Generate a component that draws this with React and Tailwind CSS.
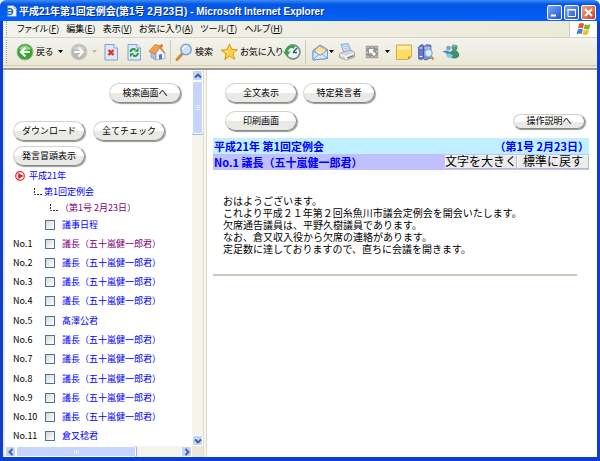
import { useState } from "react";

const CHAIR = "議長（五十嵐健一郎君）";

const speakers = [
  { no: 1, name: CHAIR, visited: true },
  { no: 2, name: CHAIR },
  { no: 3, name: CHAIR },
  { no: 4, name: CHAIR },
  { no: 5, name: "髙澤公君" },
  { no: 6, name: CHAIR },
  { no: 7, name: CHAIR },
  { no: 8, name: CHAIR },
  { no: 9, name: CHAIR },
  { no: 10, name: CHAIR },
  { no: 11, name: "倉又稔君" },
];

const speech = [
  "おはようございます。",
  "これより平成２１年第２回糸魚川市議会定例会を開会いたします。",
  "欠席通告議員は、平野久樹議員であります。",
  "なお、倉又収入役から欠席の連絡があります。",
  "定足数に達しておりますので、直ちに会議を開きます。",
];

const menus = [
  ["ファイル", "F"],
  ["編集", "E"],
  ["表示", "V"],
  ["お気に入り", "A"],
  ["ツール", "T"],
  ["ヘルプ", "H"],
];

function Icon({ children, className = "w-[18px] h-[18px]" }) {
  return (
    <svg viewBox="0 0 18 18" className={`${className} shrink-0`} aria-hidden="true">
      {children}
    </svg>
  );
}

function IePageIcon() {
  return (
    <Icon className="w-3 h-3">
      <path d="M4 1h9l4 4v12H4z" fill="#fff" stroke="#8a9ab8" />
      <path d="M13 1v4h4" fill="#d5deee" stroke="#8a9ab8" />
      <circle cx="7" cy="10" r="4.5" fill="#fff" stroke="#1f6fd0" strokeWidth="2.4" />
      <path d="M3 10h8" stroke="#1f6fd0" strokeWidth="2" />
    </Icon>
  );
}

function WindowsFlag() {
  return (
    <svg viewBox="0 0 16 14" className="w-4 h-3.5" aria-hidden="true">
      <path d="M3 2c2-1.3 3.6-1 5-.2L7 6.4C5.5 5.600 4 5.600 2 6.600z" fill="#e8552b" />
      <path d="M8.800 2.200c2 1 3.600 1 5.700-.2l-1.200 4.700c-2 1.100-3.700 1.100-5.500.1z" fill="#7cb82f" />
      <path d="M1.800 7.400c2-1.100 3.600-.9 5-.1L5.700 12c-1.500-.8-3-.8-5.200.2z" fill="#3c7fe0" />
      <path d="M7.600 7.700c2 1 3.500 1 5.500-.1l-1.200 4.700c-2 1.100-3.600 1-5.400 0z" fill="#f6bb20" />
    </svg>
  );
}

function BackIcon() {
  return (
    <Icon>
      <circle cx="9" cy="9" r="8" fill="#38a52f" stroke="#9bb594" />
      <path d="M3 6a7 7 0 0 1 12 0C11 8 7 8 3 6z" fill="#8ad77f" />
      <path d="M9.500 4.500 5 9l4.500 4.500M5.500 9H14" fill="none" stroke="#fff" strokeWidth="2.200" />
    </Icon>
  );
}

function ForwardIcon() {
  return (
    <Icon>
      <circle cx="9" cy="9" r="8" fill="#b9b9b5" stroke="#cfcfca" />
      <path d="M3 6a7 7 0 0 1 12 0C11 8 7 8 3 6z" fill="#d0d0cc" />
      <path d="M8.500 4.500 13 9l-4.500 4.500M12.500 9H4" fill="none" stroke="#f6f6f4" strokeWidth="2.200" />
    </Icon>
  );
}

function StopIcon() {
  return (
    <Icon>
      <path d="M3 1.500h9L15.500 5v12H3z" fill="#dce9fc" stroke="#7f9fd6" />
      <path d="M12 1.500V5h3.500" fill="#fff" stroke="#7f9fd6" />
      <path d="m6.500 7 5 5m0-5-5 5" stroke="#e2331d" strokeWidth="2.400" />
    </Icon>
  );
}

function RefreshIcon() {
  return (
    <Icon>
      <path d="M3 1.500h9L15.500 5v12H3z" fill="#dce9fc" stroke="#7f9fd6" />
      <path d="M12 1.500V5h3.500" fill="#fff" stroke="#7f9fd6" />
      <path d="M5.500 9c.2-3 3-3.500 5-2.200" fill="none" stroke="#2c9a33" strokeWidth="2" />
      <path d="M9.500 8.800h4V4.800z" fill="#2c9a33" />
      <path d="M13 10c-.2 3-3 3.500-5 2.200" fill="none" stroke="#2c9a33" strokeWidth="2" />
      <path d="M9 10.200H5v4z" fill="#2c9a33" />
    </Icon>
  );
}

function HomeIcon() {
  return (
    <Icon>
      <path d="m3 8 5 2v7l-5-2.500z" fill="#a9bde6" stroke="#7d92c4" strokeWidth=".6" />
      <path d="m8 10 4-5 5 5v5.500L8 17z" fill="#f3f6fd" stroke="#8396c2" strokeWidth=".7" />
      <path d="M11 16.500v-5l3-.5v5z" fill="#4f7cc9" />
      <path d="m1 8.500 6-7L12.500 3 7 11z" fill="#f0a04a" stroke="#c57629" strokeWidth=".7" />
      <path d="m12 3 5.500 7-1.500.6L11.500 5z" fill="#d97b35" />
      <path d="M12.500 1.500h2v3.300l-2-1.500z" fill="#c94b30" />
    </Icon>
  );
}

function SearchIcon() {
  return (
    <Icon>
      <path d="m7.500 10.500-5.500 6" stroke="#d28a3f" strokeWidth="3" strokeLinecap="round" />
      <circle cx="11" cy="6.500" r="5.200" fill="#c9e4fb" stroke="#7c9fcb" strokeWidth="1.400" />
      <path d="M7.800 6c.4-2 2-3 3.700-2.800" fill="none" stroke="#fff" strokeWidth="1.500" />
    </Icon>
  );
}

function StarIcon() {
  return (
    <Icon>
      <path
        d="m9.500 1 2.200 5.300 5.800.3-4.500 3.800 1.700 5.900-5-3.200-5 3.600 1.400-6-5-3.500 6-.6z"
        fill="#fbd23e"
        stroke="#d69a1c"
      />
      <path d="m9.400 4-1.500 4-3.600.3 3 1.800z" fill="#fff2ae" />
    </Icon>
  );
}

function HistoryIcon() {
  return (
    <Icon>
      <circle cx="10" cy="9" r="7" fill="#edf5f4" stroke="#7e9796" strokeWidth="1.800" />
      <path d="M10 9.500 14 5M10 9.500h4" fill="none" stroke="#35567c" strokeWidth="1.300" />
      <path d="M3.500 10c-.5-5 4-7.700 8-5.500" fill="none" stroke="#3aa34a" strokeWidth="2.800" />
      <path d="M0 8.500h7.500L4 13.500z" fill="#3aa34a" />
    </Icon>
  );
}

function MailIcon() {
  return (
    <Icon>
      <path d="m2 7.500 7-5.500 7.500 4.500v9L2 17z" fill="#9fc3f2" stroke="#6a90cc" />
      <path d="m4.500 6.500 4-3 6 2.500v4.500L9 12l-4.500-2z" fill="#fbe3ad" stroke="#e1a748" strokeWidth=".8" />
      <path d="m2 8 7 4.500 7.500-5.500v8.500L2 17z" fill="#d5e7fc" stroke="#6a90cc" strokeWidth=".8" />
      <path d="m2 17 5.500-5.500M16.500 15.500 11 11" stroke="#6a90cc" strokeWidth=".8" />
    </Icon>
  );
}

function PrintIcon() {
  return (
    <Icon>
      <path d="m3 1.500 7-1 3 7.500-7 1.500z" fill="#d3e6fb" stroke="#7595c4" strokeWidth=".8" />
      <path d="m5 3.500 5-.6M6 5.700l5-.7" stroke="#8fb1dd" strokeWidth=".7" />
      <path d="m1.500 11 4.500-2.500L13 7l3.500 2.500V14L8 17l-6.500-2.500z" fill="#d4d5d8" stroke="#8d9098" strokeWidth=".8" />
      <path d="M2 11.300 8 13.500l8-3.500M8 13.500V17" fill="none" stroke="#f8f8f8" strokeWidth="1.200" />
      <path d="m9.500 14.800 6-2" stroke="#6b707b" strokeWidth="1.200" />
    </Icon>
  );
}

function SizeIcon() {
  return (
    <Icon>
      <path d="M3.500 3.500h11v11h-11z" fill="#92928e" stroke="#a3a39e" strokeWidth="1.500" />
      <path d="M6 6h5L9.500 7.500 13 11l-2 2-3.500-3.500L6 11z" fill="#fafaf8" />
      <path
        d="M4.500 4.500h1M8.500 4.500h1M12.500 4.500h1M4.500 13.500h1M8.500 13.500h1M12.500 13.500h1M4.500 9v1M13.500 8v1"
        stroke="#e8e8e4"
      />
    </Icon>
  );
}

function NoteIcon() {
  return (
    <Icon>
      <path d="M1.500 2h15v11.500L13 16.500H1.500z" fill="#fbdc67" stroke="#d9ac3b" />
      <path d="M2.500 3h13v3.500h-13z" fill="#fff0a5" />
      <path d="M16.500 13.500H13v3z" fill="#c8912a" />
    </Icon>
  );
}

function ResearchIcon() {
  return (
    <Icon>
      <path d="m1.500 4 3-2.500 2 .8V15l-2 1.800-3-1z" fill="#6579c4" stroke="#3e4f91" strokeWidth=".7" />
      <path d="m6.500 4 3-2.500 4.500.8V15l-5.500 2-2-1z" fill="#7b8bd0" stroke="#3e4f91" strokeWidth=".7" />
      <path d="M2.500 5h3M7.500 5h6M2.500 13.500h3" stroke="#e8ecff" />
      <path d="m13.500 13 3 3.500" stroke="#cf8e3b" strokeWidth="2.200" />
      <circle cx="11.500" cy="10" r="3.600" fill="#d6effc" stroke="#8fb3d8" strokeWidth="1.400" />
    </Icon>
  );
}

function MessengerIcon() {
  return (
    <Icon>
      <circle cx="6.500" cy="5" r="2.300" fill="#6aa9cf" />
      <path d="M0 9c3-2.500 7-2 9 1L6 13c-1.500-2.500-3-4-6-4z" fill="#4e91bd" />
      <circle cx="12.500" cy="4.500" r="3" fill="#4f9f78" />
      <path d="M8 9.500c1-3 6-3.500 8-.5 2.500 3.500.8 6.500-3.500 6.500S7 13 8 9.500z" fill="#3f8f72" />
      <path d="M4 12c2-2 6-1.500 7 .8-1 2.700-5.500 3.200-7-.8z" fill="#8fc4e8" />
      <path d="M11.500 3.500c.5-.8 1.300-1 2-.8" stroke="#d4f0dc" fill="none" />
    </Icon>
  );
}

function Caret({ disabled }) {
  return (
    <svg viewBox="0 0 5 3" className="w-[5px] h-[3px] shrink-0" aria-hidden="true">
      <path d="M0 0h5L2.500 3z" fill={disabled ? "#bab7a8" : "#000"} />
    </svg>
  );
}

function Grip() {
  return <span className="w-0 self-stretch border-l border-dotted border-[#a9a694]" />;
}

function ToolButton({ label, title, className = "", children }) {
  return (
    <button type="button" title={title} aria-label={title || label} className={`flex shrink-0 items-center ${className}`}>
      {children}
      {label && <span className="ml-0.5 whitespace-nowrap">{label}</span>}
    </button>
  );
}

function PillButton({ children, small }) {
  return (
    <button
      type="button"
      className={`w-[72px] shrink-0 whitespace-nowrap rounded-full border border-[#d2d2ce] border-r-[#888] border-b-[#888] bg-linear-to-b from-white from-50% to-[#e9e9e6] to-50% text-center text-[9px] shadow-[1px_1px_1px_#999] ${
        small ? "h-[15px] leading-3" : "h-5 leading-4"
      }`}
    >
      {children}
    </button>
  );
}

function ScrollArrow({ d, title }) {
  return (
    <button
      type="button"
      aria-label={title}
      className="flex h-[11px] w-[11px] shrink-0 items-center justify-center rounded-xs border border-white bg-[#c3d4fc]"
    >
      <svg viewBox="0 0 8 8" className="h-2 w-2">
        <path d={d} fill="none" stroke="#435f8f" strokeWidth="1.800" />
      </svg>
    </button>
  );
}

function Branch() {
  return (
    <svg viewBox="0 0 9 8" className="mr-0.5 h-2 w-[9px]" aria-hidden="true">
      <path d="M1.500 0v6.500H9" fill="none" stroke="#333" strokeDasharray="2 1" />
    </svg>
  );
}

function Check({ label, ...props }) {
  return (
    <input
      type="checkbox"
      aria-label={label}
      className="h-[10px] w-[10px] appearance-none border border-[#4f7396] bg-linear-to-br from-[#d9d9d3] to-white checked:bg-[#21a121]"
      {...props}
    />
  );
}

function TitleBar() {
  return (
    <header className="flex h-[21px] shrink-0 items-center rounded-t-md bg-linear-to-b from-[#3c8cf5] via-[#0456e4] via-20% to-[#0361fa] pr-1 pl-[5px] text-white">
      <IePageIcon />
      <h1 className="ml-0.5 flex-1 whitespace-nowrap pt-0.5 font-['Liberation_Sans','Noto_Sans_CJK_JP',sans-serif] text-[10px] leading-4 font-bold [text-shadow:1px_1px_#0a2f8a]">
        平成21年第1回定例会(第1号 2月23日) - Microsoft Internet Explorer
      </h1>
      <div className="flex gap-0.5 pt-1">
        <button type="button" aria-label="最小化" className="h-[15px] w-[15px] rounded-xs border border-white bg-linear-to-br from-[#7ea4f5] to-[#1f4fd8]">
          <svg viewBox="0 0 13 13"><path d="M3 9.500h5" stroke="#fff" strokeWidth="2" /></svg>
        </button>
        <button type="button" aria-label="最大化" className="h-[15px] w-[15px] rounded-xs border border-white bg-linear-to-br from-[#7ea4f5] to-[#1f4fd8]">
          <svg viewBox="0 0 13 13"><path d="M3 4h7.500v6.500H3zM2.500 3.500H11" fill="none" stroke="#fff" /></svg>
        </button>
        <button type="button" aria-label="閉じる" className="h-[15px] w-[15px] rounded-xs border border-white bg-linear-to-br from-[#f2a083] to-[#d5391a]">
          <svg viewBox="0 0 13 13"><path d="m3 3 7 7m0-7-7 7" stroke="#fff" strokeWidth="1.800" /></svg>
        </button>
      </div>
    </header>
  );
}

function MenuBar() {
  return (
    <nav className="flex h-[17px] shrink-0 items-stretch border-b border-[#d8d5c4] bg-linear-to-r from-[#f3f3ee] to-[#ece9d8] pl-[3px]">
      <Grip />
      <ul className="flex flex-1 items-center gap-[7px] pl-[10px] text-[9px] leading-3 [font-feature-settings:'palt']">
        {menus.map(([label, key]) => (
          <li key={key}>
            <button type="button" className="whitespace-nowrap">
              {label}(<u>{key}</u>)
            </button>
          </li>
        ))}
      </ul>
      <div className="flex w-7 items-center justify-center border-l border-[#d0ccba] bg-white">
        <WindowsFlag />
      </div>
    </nav>
  );
}

function Toolbar() {
  return (
    <div
      role="toolbar"
      className="flex h-7 shrink-0 items-stretch border-b border-[#cfccb9] bg-linear-to-b from-[#f3f3ee] to-[#ebe8d6] py-0.5 pl-[3px] text-[9px] [font-feature-settings:'palt']"
    >
      <Grip />
      <div className="flex items-center pl-[9px]">
        <ToolButton label="戻る"><BackIcon /></ToolButton>
        <span className="ml-[5px]"><Caret /></span>
        <ToolButton title="進む" className="ml-[7px]"><ForwardIcon /></ToolButton>
        <span className="ml-1"><Caret disabled /></span>
        <div className="ml-[5px] flex gap-[5px]">
          <ToolButton title="中止"><StopIcon /></ToolButton>
          <ToolButton title="更新"><RefreshIcon /></ToolButton>
          <ToolButton title="ホーム"><HomeIcon /></ToolButton>
        </div>
        <span className="ml-1 h-6 border-l border-[#cfccb9]" />
        <ToolButton label="検索" className="ml-1"><SearchIcon /></ToolButton>
        <ToolButton label="お気に入り" className="ml-[7px]"><StarIcon /></ToolButton>
        <ToolButton title="履歴"><HistoryIcon /></ToolButton>
        <span className="ml-1 h-6 border-l border-[#cfccb9]" />
        <ToolButton title="メール" className="ml-[5px]"><MailIcon /></ToolButton>
        <Caret />
        <ToolButton title="印刷" className="ml-1"><PrintIcon /></ToolButton>
        <ToolButton title="サイズ" className="ml-[7px]"><SizeIcon /></ToolButton>
        <span className="ml-1"><Caret /></span>
        <ToolButton title="メモ" className="ml-[5px]"><NoteIcon /></ToolButton>
        <ToolButton title="リサーチ" className="ml-1"><ResearchIcon /></ToolButton>
        <ToolButton title="Messenger" className="ml-[7px]"><MessengerIcon /></ToolButton>
      </div>
    </div>
  );
}

function IndexPane() {
  const [checked, setChecked] = useState({});
  const toggle = (no) => setChecked((prev) => ({ ...prev, [no]: !prev[no] }));

  return (
    <aside className="grid w-[200px] shrink-0 grid-cols-[1fr_11px] grid-rows-[1fr_11px] bg-[#ece9d8] pl-0.5">
      <div className="flex min-h-0 min-w-0 flex-col overflow-hidden bg-white pt-[13px] pl-2">
        <div className="flex justify-end pr-[11px]">
          <PillButton>検索画面へ</PillButton>
        </div>
        <div className="mt-[18px] flex flex-wrap gap-x-2 gap-y-[5px]">
          <PillButton>ダウンロード</PillButton>
          <PillButton>全てチェック</PillButton>
          <PillButton>発言冒頭表示</PillButton>
        </div>

        <div className="mt-0.5 text-[9px] leading-4 whitespace-nowrap">
          <div className="flex h-4 items-center pl-0.5">
            <svg viewBox="0 0 10 10" className="mr-1 h-[10px] w-[10px]" aria-hidden="true">
              <circle cx="5" cy="5" r="4.300" fill="#fff" stroke="#e0283c" strokeWidth="1.200" />
              <path d="M3.200 2 8.500 5 3.200 8z" fill="#e0182c" />
            </svg>
            <a href="#year" className="text-[#0000ff]">平成21年</a>
          </div>
          <div className="flex h-4 items-center pl-5">
            <Branch />
            <a href="#session" className="text-[#0000ff]">第1回定例会</a>
          </div>
          <div className="flex h-4 items-center pl-9">
            <Branch />
            <a href="#day" className="text-[#800080]">（第1号 2月23日）</a>
          </div>
          <div className="flex h-[18px] items-center pl-8">
            <Check label="議事日程" checked={!!checked.agenda} onChange={() => toggle("agenda")} />
            <a href="#agenda" className="ml-[7px] text-[#0000ff]">議事日程</a>
          </div>
        </div>

        <ul className="grid flex-1 auto-rows-fr text-[9px] leading-4 whitespace-nowrap">
          {speakers.map((s) => (
            <li key={s.no} className="flex items-center">
              <span className="w-8">No.{s.no}</span>
              <Check label={`No.${s.no}`} checked={!!checked[s.no]} onChange={() => toggle(s.no)} />
              <a href={`#no${s.no}`} className={`ml-[7px] ${s.visited ? "text-[#800080]" : "text-[#0000ff]"}`}>
                {s.name}
              </a>
            </li>
          ))}
        </ul>
      </div>

      <div className="flex flex-col bg-[#f4f3ec]">
        <ScrollArrow title="上へ" d="m1 5.500 3-3 3 3" />
        <div className="flex flex-1 flex-col">
          <div className="flex h-[15%] flex-col items-center justify-center gap-px rounded-xs border border-white bg-[#c5d5fd] shadow-[0_1px_#9db5e8]">
            <span className="w-1 border-t border-[#eef4fe]" />
            <span className="w-1 border-t border-[#eef4fe]" />
            <span className="w-1 border-t border-[#eef4fe]" />
          </div>
        </div>
        <ScrollArrow title="下へ" d="m1 2.500 3 3 3-3" />
      </div>
      <div className="flex bg-[#f4f3ec]">
        <ScrollArrow title="左へ" d="m5.500 1-3 3 3 3" />
        <div className="flex flex-1">
          <div className="flex w-[73%] items-center justify-center gap-px rounded-xs border border-white bg-[#c5d5fd] shadow-[1px_0_#9db5e8]">
            <span className="h-1 border-l border-[#eef4fe]" />
            <span className="h-1 border-l border-[#eef4fe]" />
            <span className="h-1 border-l border-[#eef4fe]" />
          </div>
        </div>
        <ScrollArrow title="右へ" d="m2.500 1 3 3-3 3" />
      </div>
    </aside>
  );
}

function MinutesPane() {
  return (
    <main className="min-w-0 flex-1 bg-white pt-[13px] pr-2 pl-1.5">
      <div className="pr-1 pl-3">
        <div className="flex gap-1.5">
          <PillButton>全文表示</PillButton>
          <PillButton>特定発言者</PillButton>
        </div>
        <div className="mt-2 flex items-center justify-between">
          <PillButton>印刷画面</PillButton>
          <PillButton small>操作説明へ</PillButton>
        </div>
      </div>

      <div className="mt-[7px] text-[11px] leading-4 font-bold whitespace-nowrap text-[#0000ff]">
        <div className="flex h-4 justify-between bg-[#c0f0ff] pl-px">
          <h2>平成21年 第1回定例会</h2>
          <span>（第1号 2月23日）</span>
        </div>
        <div className="flex h-4 items-center justify-between bg-[#c0c0ff] pl-px">
          <h3>No.1 議長（五十嵐健一郎君）</h3>
          <div className="flex font-['Liberation_Sans','Noto_Sans_CJK_JP',sans-serif] text-xs font-normal text-black">
            <button type="button" className="flex h-3.5 w-[72px] items-center justify-center border border-[#f8f8f8] border-r-[#bbb] border-b-[#bbb] bg-[#ececec] leading-3">
              文字を大きく
            </button>
            <button type="button" className="flex h-3.5 w-[72px] items-center justify-center border border-[#f8f8f8] border-r-[#bbb] border-b-[#bbb] bg-[#ececec] leading-3">
              標準に戻す
            </button>
          </div>
        </div>
      </div>

      <div className="mt-[26px] pl-[10px] font-['Liberation_Sans','Noto_Sans_CJK_JP',sans-serif] text-[10px] leading-3">
        {speech.map((line) => (
          <p key={line}>{line}</p>
        ))}
      </div>
      <hr className="mt-[18px] mr-3 border-t-2 border-[#c9c9bd]" />
    </main>
  );
}

export default function App() {
  return (
    <div className="flex h-screen flex-col overflow-hidden bg-white font-['Noto_Sans_CJK_JP','Liberation_Sans',sans-serif] text-black">
      <TitleBar />
      <div className="flex min-h-0 flex-1 flex-col border-x-[3px] border-b-4 border-[#0a3fd0] bg-[#ece9d8]">
        <MenuBar />
        <Toolbar />
        <div className="mt-0.5 flex min-h-0 flex-1 border-t-2 border-[#a09d8f]">
          <IndexPane />
          <div className="w-1 shrink-0 border-x border-[#dedbc8] bg-[#f6f5ee]" />
          <MinutesPane />
        </div>
      </div>
    </div>
  );
}
